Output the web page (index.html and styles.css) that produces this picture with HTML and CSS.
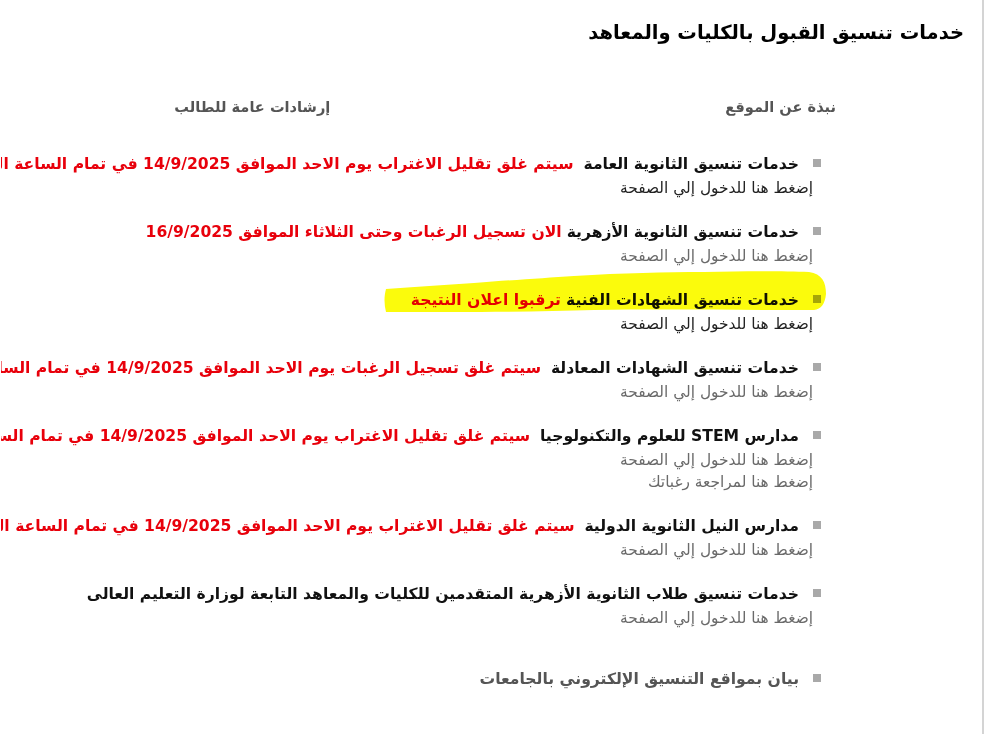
FILE: index.html
```html
<!DOCTYPE html>
<html lang="ar" dir="rtl">
<head>
<meta charset="utf-8">
<title>خدمات تنسيق القبول بالكليات والمعاهد</title>
<link rel="stylesheet" href="styles.css">
</head>
<body>
<div class="page">
  <h1 class="title">خدمات تنسيق القبول بالكليات والمعاهد</h1>
  <nav class="tabs">
    <a class="tab tab-about" href="#">نبذة عن الموقع</a>
    <a class="tab tab-guide" href="#">إرشادات عامة للطالب</a>
  </nav>
  <ul class="services">
    <li class="item">
      <div class="head"><span class="mark"></span><span class="text"><b class="name">خدمات تنسيق الثانوية العامة</b>&nbsp; <span class="note">سيتم غلق تقليل الاغتراب يوم الاحد الموافق 14/9/2025 في تمام الساعة الثانية عشر ظهرا</span></span></div>
      <a class="link dark" href="#">إضغط هنا للدخول إلي الصفحة</a>
    </li>
    <li class="item">
      <div class="head"><span class="mark"></span><span class="text"><b class="name">خدمات تنسيق الثانوية الأزهرية</b> <span class="note">الان تسجيل الرغبات وحتى الثلاثاء الموافق 16/9/2025</span></span></div>
      <a class="link" href="#">إضغط هنا للدخول إلي الصفحة</a>
    </li>
    <li class="item highlighted">
      <svg class="highlighter" viewBox="0 0 443 46" width="443" height="46" aria-hidden="true">
        <path d="M2 19 C30 17 60 15 90 13 C130 10 160 8 190 6 C240 3 280 2 320 2 C360 1 400 1 425 2 C438 4 442 12 442 24 C441 34 437 39 430 40 C350 40 280 39 210 40 C150 42 80 42 2 42 C0 34 0 26 2 19 Z"/>
      </svg>
      <div class="head"><span class="mark"></span><span class="text"><b class="name">خدمات تنسيق الشهادات الفنية</b> <span class="note">ترقبوا اعلان النتيجة</span></span></div>
      <a class="link dark" href="#">إضغط هنا للدخول إلي الصفحة</a>
    </li>
    <li class="item">
      <div class="head"><span class="mark"></span><span class="text"><b class="name">خدمات تنسيق الشهادات المعادلة</b>&nbsp; <span class="note">سيتم غلق تسجيل الرغبات يوم الاحد الموافق 14/9/2025 في تمام الساعة الثانية عشر ظهرا</span></span></div>
      <a class="link" href="#">إضغط هنا للدخول إلي الصفحة</a>
    </li>
    <li class="item">
      <div class="head"><span class="mark"></span><span class="text"><b class="name">مدارس STEM للعلوم والتكنولوجيا</b>&nbsp; <span class="note">سيتم غلق تقليل الاغتراب يوم الاحد الموافق 14/9/2025 في تمام الساعة الثانية عشر ظهرا</span></span></div>
      <a class="link" href="#">إضغط هنا للدخول إلي الصفحة</a>
      <a class="link" href="#">إضغط هنا لمراجعة رغباتك</a>
    </li>
    <li class="item">
      <div class="head"><span class="mark"></span><span class="text"><b class="name">مدارس النيل الثانوية الدولية</b>&nbsp; <span class="note">سيتم غلق تقليل الاغتراب يوم الاحد الموافق 14/9/2025 في تمام الساعة الثانية عشر ظهرا</span></span></div>
      <a class="link" href="#">إضغط هنا للدخول إلي الصفحة</a>
    </li>
    <li class="item">
      <div class="head"><span class="mark"></span><span class="text"><b class="name">خدمات تنسيق طلاب الثانوية الأزهرية المتقدمين للكليات والمعاهد التابعة لوزارة التعليم العالى</b></span></div>
      <a class="link" href="#">إضغط هنا للدخول إلي الصفحة</a>
    </li>
    <li class="item last">
      <div class="head"><span class="mark"></span><span class="text"><b class="name muted">بيان بمواقع التنسيق الإلكتروني بالجامعات</b></span></div>
    </li>
  </ul>
</div>
</body>
</html>
```

FILE: styles.css
```css
html, body {
  margin: 0;
  padding: 0;
  background: #ffffff;
}

body {
  font-family: "DejaVu Sans", "Noto Sans", sans-serif;
  color: #000;
}

.page {
  box-sizing: border-box;
  width: 983px;
  min-height: 734px;
  padding: 17px 18px 0 0;
  border-right: 2px solid #d4d4d4;
  overflow: hidden;
}

.title {
  margin: 0;
  font-size: 19.5px;
  line-height: 32px;
  font-weight: bold;
  color: #000;
  white-space: nowrap;
}

.tabs {
  display: flex;
  margin-top: 46px;
  padding-right: 128px;
  gap: 395px;
}

.tab {
  font-size: 14.6px;
  line-height: 24px;
  font-weight: bold;
  color: #555555;
  text-decoration: none;
  white-space: nowrap;
}

.services {
  list-style: none;
  margin: 32px 0 0 0;
  padding: 0 143px 0 0;
}

.item {
  position: relative;
  margin-bottom: 20px;
}

.item.last {
  margin-top: 37px;
}

.head {
  display: flex;
  align-items: center;
  gap: 14px;
  height: 26px;
  white-space: nowrap;
}

.mark {
  flex: none;
  width: 8px;
  height: 8px;
  background: #a9a9a9;
  margin-top: -3px;
}

.text {
  font-size: 15.6px;
  line-height: 26px;
}

.name {
  font-weight: bold;
  color: #111111;
}

.name.muted {
  color: #555555;
}

.note {
  font-weight: bold;
  color: #e8000b;
}

.link {
  display: block;
  padding-right: 8px;
  font-size: 15.4px;
  line-height: 22px;
  color: #6a6a6a;
  text-decoration: none;
  white-space: nowrap;
}

.link.dark {
  color: #222222;
}

.highlighter {
  position: absolute;
  top: -17px;
  right: -6px;
  fill: #fbfb0c;
  mix-blend-mode: multiply;
  pointer-events: none;
}
```
